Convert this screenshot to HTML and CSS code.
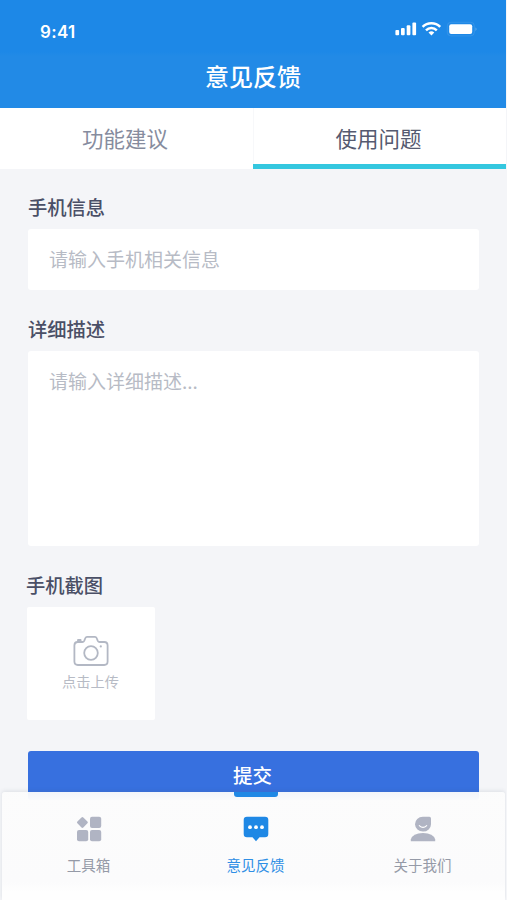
FILE: index.html
```html
<!DOCTYPE html>
<html lang="zh-CN">
<head>
<meta charset="utf-8">
<title>意见反馈</title>
<link rel="stylesheet" href="styles.css">
</head>
<body>
<div class="app">
  <header class="header">
    <div class="status">
      <span class="time">9:41</span>
      <svg class="status-icons" width="84" height="18" viewBox="0 0 84 18" fill="#fff">
        <rect x="1.4" y="10" width="3.7" height="5.2" rx="1"/>
        <rect x="7" y="8" width="3.7" height="7.2" rx="1"/>
        <rect x="12.7" y="5.2" width="3.7" height="10" rx="1"/>
        <rect x="18.4" y="2.4" width="3.7" height="12.8" rx="1"/>
        <g fill="none" stroke="#fff" stroke-width="2.5">
          <path d="M28.6 6.9a12.4 12.4 0 0 1 17.6 0"/>
          <path d="M32 10.3a7.7 7.7 0 0 1 10.8 0"/>
        </g>
        <path d="M34.5 12.4a4.4 4.4 0 0 1 5.8 0L37.4 15.4z"/>
        <rect x="53.3" y="2.3" width="27" height="13.6" rx="3.6" fill="none" stroke="#fff" stroke-opacity=".1"/>
        <rect x="55.2" y="4.3" width="23" height="9.7" rx="2"/>
        <path d="M81.7 7.2q1.7 2 0 4z" fill-opacity=".5"/>
      </svg>
    </div>
    <h1 class="title">意见反馈</h1>
  </header>

  <div class="tabs">
    <div class="tab">功能建议</div>
    <div class="tab tab-active">使用问题</div>
  </div>

  <main class="form">
    <label class="label" for="phone">手机信息</label>
    <input class="field" id="phone" type="text" placeholder="请输入手机相关信息">
    <label class="label" for="detail">详细描述</label>
    <textarea class="field area" id="detail" placeholder="请输入详细描述..."></textarea>
    <div class="label label-shot">手机截图</div>
    <div class="upload">
      <svg width="36" height="32" viewBox="0 0 36 32" fill="none" stroke="#b3b8c4" stroke-width="1.8" stroke-linejoin="round">
        <path d="M4.6 7H9.4Q10.6 7 11.2 5.8L12.4 3Q12.9 1.9 14 1.9H22Q23.1 1.9 23.6 3L24.8 5.8Q25.4 7 26.6 7H31.2Q34.6 7 34.6 10.4V26.6Q34.6 30 31.2 30H4.8Q1.4 30 1.4 26.6V10.4Q1.4 7 4.6 7Z"/>
        <path d="M5 6.8V5H7.6V6.8"/>
        <circle cx="18" cy="18" r="6.8"/>
        <circle cx="27.8" cy="11.4" r="1.1" fill="#b3b8c4" stroke="none"/>
      </svg>
      <span class="upload-text">点击上传</span>
    </div>
    <button class="submit" type="button">提交</button>
  </main>

  <nav class="nav">
    <div class="nav-item">
      <svg width="26" height="26" viewBox="0 0 26 26" fill="#b0b4c3">
        <rect x="2.2" y="2.2" width="8.4" height="8.4" rx="1.3" transform="rotate(45 6.4 6.4)"/>
        <rect x="14" y=".8" width="11.2" height="11.2" rx="2"/>
        <rect x="1" y="14" width="11.2" height="11.2" rx="2"/>
        <rect x="14" y="14" width="11.2" height="11.2" rx="2"/>
      </svg>
      <span>工具箱</span>
    </div>
    <div class="nav-item nav-active">
      <svg width="26" height="26" viewBox="0 0 26 26">
        <path d="M4 .8H22Q25.3 .8 25.3 4.1V18Q25.3 21.3 22 21.3H16.5L13 25.2L9.5 21.3H4Q.7 21.3 .7 18V4.1Q.7 .8 4 .8Z" fill="#1f88e5"/>
        <g fill="#fff"><circle cx="7" cy="11.2" r="1.9"/><circle cx="13" cy="11.2" r="1.9"/><circle cx="19" cy="11.2" r="1.9"/></g>
      </svg>
      <span>意见反馈</span>
    </div>
    <div class="nav-item">
      <svg width="26" height="26" viewBox="0 0 26 26" fill="#b0b4c3">
        <path d="M12.8 .8H19.4Q21 .8 21 2.4V8.2A8 7.4 0 1 1 12.8 .8Z"/>
        <path d="M.8 25.2V23.6Q2.6 17 13 17T25.2 23.6V25.2Z"/>
        <path d="M9.3 9.6Q13 13 16.7 9.6" fill="none" stroke="#fff" stroke-width="1.1" stroke-linecap="round"/>
      </svg>
      <span>关于我们</span>
    </div>
  </nav>
</div>
</body>
</html>
```
FILE: styles.css
```css
* { box-sizing: border-box; }

body {
  margin: 0;
  background: #f4f5f8;
  font-family: "Noto Sans CJK SC", sans-serif;
}

.app {
  display: flex;
  flex-direction: column;
  width: 506px;
  height: 900px;
  overflow: hidden;
}

.header {
  height: 108px;
  background: linear-gradient(#1d88e7 0 48%, #228ae6 52%);
  color: #fff;
}

.status {
  display: flex;
  justify-content: space-between;
  height: 59px;
  padding: 20px 28px 0 40px;
}

.time {
  font: 600 17px/24px Inter, sans-serif;
  letter-spacing: 0.3px;
}

.title {
  margin: 0;
  font-size: 24px;
  font-weight: 500;
  line-height: 33px;
  text-align: center;
}

.tabs {
  display: grid;
  grid-template-columns: 1fr 1fr;
  height: 61px;
  background: #fff;
}

.tab {
  height: 61px;
  padding-right: 3px;
  color: #868c9e;
  font-size: 21.5px;
  line-height: 60px;
  text-align: center;
}

.tab-active {
  padding-right: 2px;
  border-bottom: 5px solid #34c7df;
  box-shadow: inset 1px 0 #f7f8fa;
  color: #555a70;
}

.form {
  display: flex;
  flex-direction: column;
  height: 631px;
  padding: 23px 27px 0 28px;
}

.label {
  height: 37px;
  color: #4a4f66;
  font-size: 19.3px;
  font-weight: 500;
  line-height: 31px;
}

.field {
  width: 100%;
  height: 61px;
  margin: 0 0 24px;
  padding: 0 21px 1px;
  border: 0;
  border-radius: 3px;
  background: #fff;
  font-family: inherit;
  font-size: 19px;
  line-height: 28px;
  outline: 0;
  resize: none;
}

.field::placeholder { color: #b7bbc5; opacity: 1; }

.area {
  height: 196px;
  padding-top: 16px;
}

.label-shot {
  margin-left: -2px;
}

.upload {
  display: flex;
  flex-direction: column;
  align-items: center;
  width: 128px;
  height: 113px;
  margin-left: -1px;
  padding-top: 28px;
  border-radius: 2px;
  background: #fff;
}

.upload-text {
  margin: 4px 1px 0 0;
  color: #b7bbc5;
  font-size: 14.2px;
  line-height: 20px;
}

.submit {
  width: 100%;
  height: 49px;
  margin-top: 31px;
  padding: 0 2px 2px 0;
  border: 0;
  border-radius: 3px;
  background: #3770df;
  color: #fff;
  font: 500 19.5px/46px "Noto Sans CJK SC", sans-serif;
}

.nav {
  position: relative;
  display: grid;
  grid-template-columns: repeat(3, 167px);
  height: 108px;
  margin: -8px 1px 0 2px;
  padding-left: 3px;
  border-radius: 3px 3px 0 0;
  background: linear-gradient(rgba(252, 252, 252, 0.94) 0, rgba(252, 252, 252, 0.98) 8px, #fbfbfc 90px, #fefefe 100px);
  box-shadow: 0 -1px 4px rgba(60, 70, 90, 0.12);
}

.nav-item {
  position: relative;
  display: flex;
  flex-direction: column;
  align-items: center;
  gap: 10px;
  padding-top: 24px;
  color: #959aa7;
  font-size: 14.5px;
  line-height: 26px;
}

.nav-active { color: #2f8fe5; }

.nav-active::before {
  content: "";
  position: absolute;
  top: 0;
  width: 44px;
  height: 5px;
  border-radius: 0 0 3px 3px;
  background: #1f88e5;
}
```
